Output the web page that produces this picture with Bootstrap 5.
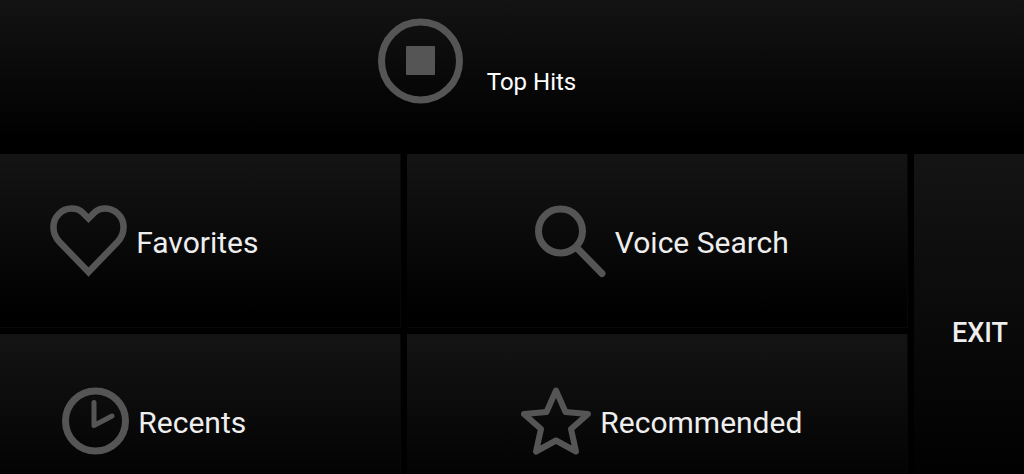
<!DOCTYPE html>
<html lang="en">
<head>
<meta charset="utf-8">
<meta name="viewport" content="width=device-width, initial-scale=1">
<title>Top Hits</title>
<link href="https://cdn.jsdelivr.net/npm/bootstrap@5.3.0/dist/css/bootstrap.min.css" rel="stylesheet">
<style>
body { background: #000; font-family: Roboto, sans-serif; }
.board { display: grid; gap: 6px; grid-template-columns: 401fr 502fr 110fr; grid-template-rows: 148px 174px 174px; }
.now-playing { grid-column: 1 / -1; background: linear-gradient(#131313, #000 94%); padding: 18px 70px 0 0; color: #fff; font-size: 24px; line-height: 30px; gap: 23px; }
.now-playing svg { width: 86px; height: 86px; }
.now-title { margin-top: 49px; }
.tile { border: 1px solid #080808; border-width: 0 1px 1px 0; border-radius: 0; background: linear-gradient(#141414, #000 94%); color: #eee; font-size: 30px; line-height: 36px; padding: 1px 0 0; gap: 9px; }
.tile:hover, .tile:focus-visible { color: #fff; border-color: #333; }
.tile span { padding-top: 3px; }
.tile-start { padding-right: 91px; }
.tile-mid { padding-left: 10px; }
.tile-exit { grid-column: 3; grid-row: 2 / span 2; border-right: 0; padding-left: 22px; font-size: 27px; font-weight: 500; }
.stroke-icon { fill: none; stroke: #555; stroke-width: 7; flex: none; }
</style>
</head>
<body>
<main class="board vh-100 overflow-hidden">
  <header class="now-playing d-flex justify-content-center align-items-start">
    <svg class="stroke-icon" viewBox="0 0 86 86" aria-hidden="true"><circle cx="42.500" cy="43" r="39"/><rect x="28" y="28" width="29" height="29" rx="1" fill="#555" stroke="none"/></svg>
    <div class="now-title">Top Hits</div>
  </header>
  <button type="button" class="btn tile tile-start d-flex align-items-center justify-content-center">
    <svg class="stroke-icon" width="77" height="72" viewBox="0 0 77 72" aria-hidden="true"><path d="M38.5 67 L9.500 37 C1.500 28.500 1.500 16 9 8.800 C16 2 27 2 33 8 L38.500 13.500 L44 8 C50 2 61 2 68 8.800 C75.500 16 75.500 28.500 67.500 37 Z" stroke-width="6.500"/></svg>
    <span>Favorites</span>
  </button>
  <button type="button" class="btn tile tile-mid d-flex align-items-center justify-content-center">
    <svg class="stroke-icon" width="71" height="73" viewBox="0 0 71 73" aria-hidden="true"><circle cx="25.500" cy="26" r="22"/><path d="M42 43 L67 68.500" stroke-linecap="round"/></svg>
    <span>Voice Search</span>
  </button>
  <button type="button" class="btn tile tile-exit d-flex align-items-center justify-content-center"><span>EXIT</span></button>
  <button type="button" class="btn tile tile-start d-flex align-items-center justify-content-center">
    <svg class="stroke-icon" width="67" height="68" viewBox="0 0 67 68" aria-hidden="true"><circle cx="33.500" cy="34" r="30"/><path d="M32 15.500 V38.500 L50 29" stroke-width="5" stroke-linecap="round" stroke-linejoin="round"/></svg>
    <span>Recents</span>
  </button>
  <button type="button" class="btn tile tile-mid d-flex align-items-center justify-content-center">
    <svg class="stroke-icon" width="70" height="69" viewBox="0 0 70 69" aria-hidden="true"><path d="M35 3.500 L44.500 25 L67 27 L50 42 L55 64.500 L35 53.500 L15 64.500 L20 42 L3 27 L25.500 25 Z" stroke-width="6" stroke-linejoin="round"/></svg>
    <span>Recommended</span>
  </button>
</main>
<script src="https://cdn.jsdelivr.net/npm/bootstrap@5.3.0/dist/js/bootstrap.bundle.min.js"></script>
</body>
</html>
